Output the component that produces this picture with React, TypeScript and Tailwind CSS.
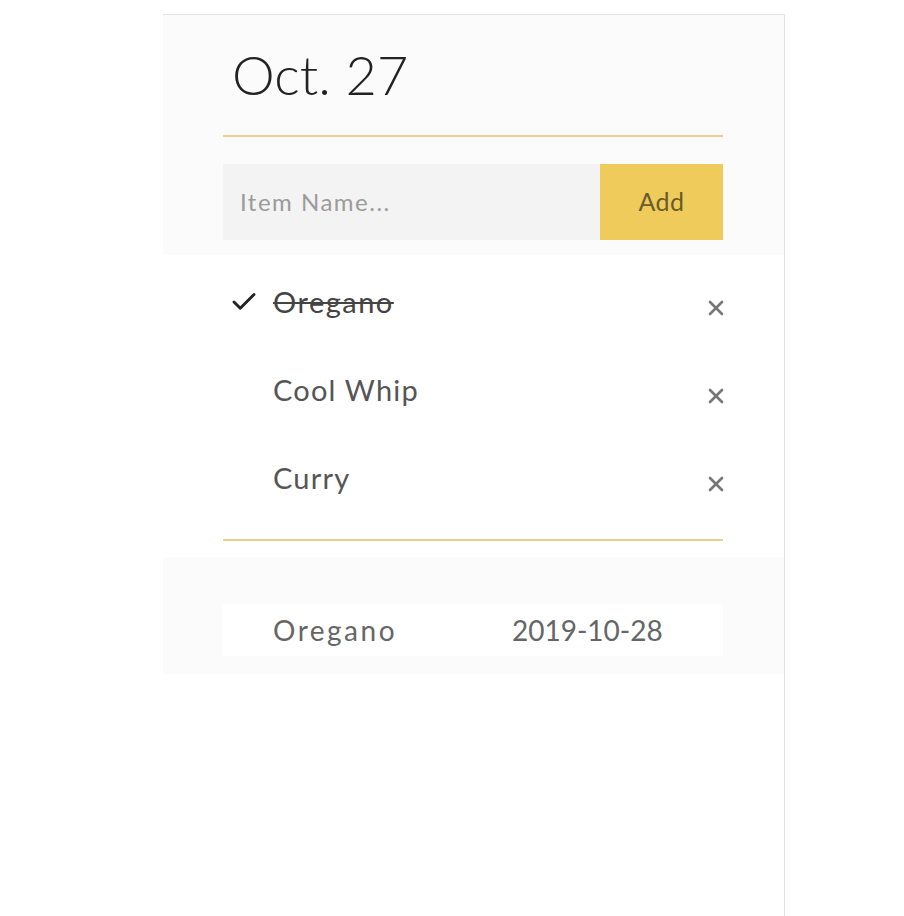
import { Check, X } from 'lucide-react';

interface Item {
  name: string;
  done: boolean;
}

const items: Item[] = [
  { name: 'Oregano', done: true },
  { name: 'Cool Whip', done: false },
  { name: 'Curry', done: false },
];

function ItemRow({ item }: { item: Item }) {
  return (
    <div className="flex h-[88px] items-center">
      <div className="flex w-[50px] items-center pl-[6px]">
        {item.done && <Check size={30} strokeWidth={2.3} className="text-[#222]" />}
      </div>
      <span
        className={
          item.done
            ? 'flex-1 text-[29px] tracking-[1.5px] text-[#444] line-through decoration-[2px]'
            : 'flex-1 text-[29px] tracking-[1.2px] text-[#555]'
        }
      >
        {item.name}
      </span>
      <button className="-mr-[5px] mt-[12px] text-[#777]">
        <X size={24} strokeWidth={2.6} />
      </button>
    </div>
  );
}

export default function App() {
  return (
    <div className="min-h-[916px] bg-white font-['Lato','Noto_Sans',sans-serif]">
      <div className="ml-[163px] mt-[14px] flex min-h-[902px] w-[622px] flex-col border-t border-r border-[#e3e3e3]">
        <div className="bg-[#fbfbfb] px-[60px] pb-[15px] pt-[28px]">
          <h1 className="pl-[9px] text-[54px] font-light leading-[64px] text-[#222]">Oct. 27</h1>
          <div className="mt-[28px] h-[2px] w-[500px] bg-[#ebcf90]" />
          <div className="mt-[27px] flex h-[76px] w-[500px]">
            <input
              placeholder="Item Name..."
              className="flex-1 bg-[#f3f3f3] px-[17px] text-[24px] tracking-[1.5px] text-[#555] outline-none placeholder:text-[#9b9b9b]"
            />
            <button className="w-[123px] bg-[#eecb5a] text-[25px] tracking-[0.5px] text-[#6b5a2a]">Add</button>
          </div>
        </div>
        <div className="bg-white px-[60px] pt-[3px]">
          <div className="w-[500px]">
            {items.map((item) => (
              <ItemRow key={item.name} item={item} />
            ))}
          </div>
          <div className="mt-[17px] h-[2px] w-[500px] bg-[#ebcf90]" />
        </div>
        <div className="mt-[16px] bg-[#fbfbfb] px-[59px] pb-[18px] pt-[47px]">
          <div className="flex h-[52px] w-[501px] items-center bg-white">
            <span className="w-[290px] pl-[51px] text-[28px] tracking-[2.5px] text-[#666]">Oregano</span>
            <span className="text-[28px] text-[#666]">2019-10-28</span>
          </div>
        </div>
      </div>
    </div>
  );
}
